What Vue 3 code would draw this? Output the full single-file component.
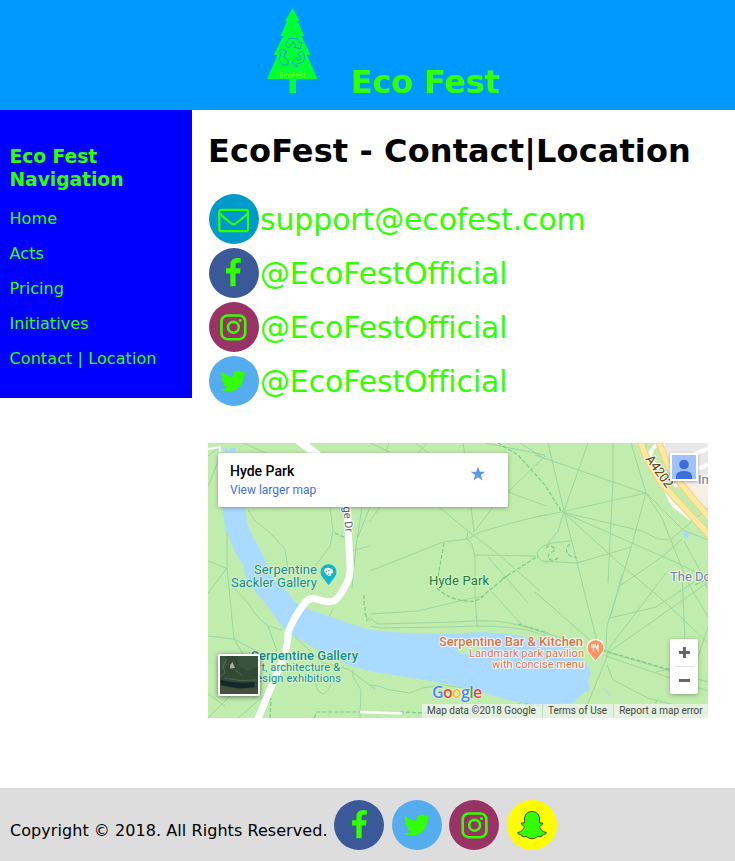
<script setup>
const navItems = ['Home', 'Acts', 'Pricing', 'Initiatives', 'Contact | Location']

const contacts = [
  { icon: 'email', label: 'support@ecofest.com' },
  { icon: 'facebook', label: '@EcoFestOfficial' },
  { icon: 'instagram', label: '@EcoFestOfficial' },
  { icon: 'twitter', label: '@EcoFestOfficial' },
]

const footerIcons = ['facebook', 'twitter', 'instagram', 'snapchat']

const colors = {
  email: '#0099cc',
  facebook: '#3b5998',
  instagram: '#993366',
  twitter: '#55acee',
  snapchat: '#fffc00',
}

// Footpaths across the park, in map coordinates
const paths = [
  'M0 13L10 5M0 43Q8 25 12 12M19 86L19 125L23 165L26 196M0 150L19 125M35 0L62 12',
  'M40 67L47 78L60 88L77 106L81 134M122 64L125 88L122 103L103 129M154 64L148 103L144 145M143 108L162 103M162 64L150 94',
  'M24 143L40 160L48 172L60 183L74 187M60 183L69 208M0 193L26 196L48 208L60 218M26 196L40 219M0 251L17 263M0 275L30 245',
  'M87 194L115 220L140 226L167 246M107 239Q109 250 116 251Q122 247 123 241M145 227L145 234L153 247L152 275M125 165L120 177M156 170L162 178',
  'M162 128L235 99L260 96L272 89Q320 75 338 72M162 78L172 64M231 64L260 88L290 111L332 148M263 64L266 89L285 64M260 88L259 96L264 101L267 114L267 150L269 184',
  'M267 112L327 113M280 114L320 160M178 9L181 0M162 0L182 9M210 10L219 0M208 0L220 10M255 0L257 12M277 0L337 12M312 0L337 16',
  'M300 49L337 13M300 49L338 63M162 171L210 168L260 156L275 153M162 175L170 181L248 179Q290 175 314 183L370 200',
  'M162 183L173 185L240 184Q290 181 319 187L350 196M284 149L314 182',
  'M340 0L356 68L369 119L379 160L391 205M327 12L356 22L437 50M380 0L356 68L350 88L338 103M405 0L405 38L401 118L400 140',
  'M423 0L438 50L423 105L411 145L399 183L398 207M438 50L353 69L327 74M354 69L434 88L450 96L462 97M356 70L467 119L500 135',
  'M356 70L410 119L458 160L500 200M500 65L462 97M423 104L369 120L334 118M363 98L344 100Q332 103 329 110Q329 118 340 120',
  'M438 50L454 75L468 110L480 140L500 174M438 50L475 87L500 97M474 96L454 114L413 142M476 98L496 135L499 145',
  'M327 149L391 205M414 132L402 175L448 164L500 130M458 130L399 208M474 130L478 220M500 184L488 220L448 229',
  'M400 211L374 275M399 222L405 237L440 255L470 263L500 270M395 212L500 248M395 208L500 239M398 211L499 140M450 256L440 275M487 275L500 263',
  'M162 242L170 243L182 247L202 250L215 245L235 242L272 247L312 259L332 263M0 118L20 126M30 275L44 263L65 245',
]

const dashed = [
  'M127 90L140 96M156 152L156 160L159 178M290 0L310 12L337 42L353 68M236 100L231 128L229 139M229 145Q240 156 258 158Q270 160 277 151L300 132M294 136L330 113',
  'M310 181L340 190M394 207L463 227M106 275L109 269L155 269M192 269L220 270M62 275L63 255M487 142L500 135M310 261L340 263',
  'M338 105Q341 101 345 104Q349 107 344 109Q338 112 341 116Q345 119 350 115M362 101Q355 107 362 113L369 115',
]
</script>

<template>
  <div class="page">
    <header class="header">
      <svg class="tree" width="51" height="86" viewBox="0 0 51 86">
        <path fill="#00ff33" d="M25.500 0L32.500 13H30.500L37 28H34.500L43.500 47H40L50.500 71H29V85H22.500V71H0L10.500 47H7L16 28H13.500L20 13H18Z" />
        <g fill="none" stroke="#0b9edc" stroke-width="1">
          <path d="M18 37L22 30.500H30L33 35L35 34L33 41L27 39L29 38L26 34L22 40Z" />
          <path d="M15 41L20 44L18 45L17 49L21 52V57H15L12 51L14 46L12 43Z" />
          <path d="M31 46L35 43L38 48L36 54L30 56V59L25 54L30 49V52H33L34 50Z" />
        </g>
        <text x="12" y="69.500" textLength="27" lengthAdjust="spacingAndGlyphs">EcoFest</text>
      </svg>
      <h1 class="brand">Eco Fest</h1>
    </header>

    <div class="body">
      <nav class="nav">
        <h3>Eco Fest<br />Navigation</h3>
        <a v-for="item in navItems" :key="item">{{ item }}</a>
      </nav>

      <main class="main">
        <h1 class="title">EcoFest - Contact|Location</h1>
        <ul class="contacts">
          <li v-for="(c, i) in contacts" :key="i">
            <svg class="badge" width="50" height="50" viewBox="0 0 50 50">
              <circle cx="25" cy="25" r="25" :fill="colors[c.icon]" />
              <g v-if="c.icon === 'email'" fill="none" stroke="#33ff00" stroke-width="2.200">
                <rect x="10.300" y="15.900" width="28.700" height="21.300" rx="2" />
                <path d="M10.800 19.500Q12.800 22 16.800 25L21.800 29Q24.700 31.500 27.600 29L32.600 25Q36.600 22 38.600 19.500" />
              </g>
              <path v-else-if="c.icon === 'facebook'" class="glyph" transform="translate(8.900 10) scale(.017)" d="M1343 12v264h-157q-86 0-116 36t-30 108v189h293l-39 296h-254v759h-306v-759h-255v-296h255v-218q0-186 104-288.500t277-102.500q147 0 228 12z" />
              <g v-else-if="c.icon === 'instagram'" fill="none" stroke="#33ff00" stroke-width="2.600">
                <rect x="12.500" y="13.500" width="23.700" height="23.700" rx="6" />
                <circle cx="24.400" cy="25.300" r="5.400" />
                <circle class="glyph" cx="31.300" cy="18.500" r="1.600" stroke="none" />
              </g>
              <path v-else class="glyph" transform="translate(9.300 10.200) scale(.0165)" d="M1684 408q-67 98-162 167 1 14 1 42 0 130-38 259.500t-115.500 248.500-184.500 210.500-258 146-323 54.500q-271 0-496-145 35 4 78 4 225 0 401-138-105-2-188-64.500t-114-159.500q33 5 61 5 43 0 85-11-112-23-185.500-111.500t-73.500-205.500v-4q68 38 146 41-66-44-105-115t-39-154q0-88 44-163 121 149 294.500 238.500t371.500 99.500q-8-38-8-74 0-134 94.500-228.500t228.500-94.500q140 0 236 102 109-21 205-78-37 115-142 178 93-10 186-50z" />
            </svg>
            <span>{{ c.label }}</span>
          </li>
        </ul>

        <section class="map">
          <svg class="tiles" width="500" height="275" viewBox="0 0 500 275">
            <rect width="500" height="275" fill="#c0ecae" />
            <path fill="#e8e8e8" d="M452 0H500V75L474 43Z" />
            <path fill="#f5efe5" d="M474 40L500 31V65L488 54Z" />
            <g class="trail"><path v-for="(d, i) in paths" :key="i" :d="d" /></g>
            <g class="trail dash"><path v-for="(d, i) in dashed" :key="i" :d="d" /></g>
            <g class="water">
              <path d="M14 5Q19 4 20 9L17 12L14 55V62L17 84L26 107L35 122L38 137L57 160L79 190L88 194L114 210L140 222L165 229L205 235L245 242L272 249L305 258L332 262L365 260L377 249L382 247L380 239L383 229L377 219L356 200L332 198L309 192L275 189L242 191L195 190L162 187L140 180L97 165L87 159L80 149L65 135L55 112L40 84L37 69L34 20L28 10L27 5H22L20 12Z" />
              <circle cx="478" cy="92" r="3" />
              <path d="M394 244Q401 249 403 255Q398 250 394 244Z" />
            </g>
            <path fill="#c0ecae" d="M250 196H274V211H253Q246 206 250 196Z" />
            <g class="road">
              <path d="M49 278L76 213Q80 202 80 190Q85 175 97 160Q101 154 108 156Q119 160 126 158Q132 154 137 143Q143 135 142 123L139 62" stroke-width="7" />
              <path d="M90 -3L116 17" stroke-width="8" />
              <path d="M0 6L12 4V9" stroke-width="2" />
              <path d="M152 269L194 270.500" stroke-width="2.500" />
              <path d="M445 6Q439 11 445 19L461 54Q463 61 470 66L482 75L491 77M445 5Q450 0 457 1M486 11L500 6M486 27L500 22M466 43L477 38" stroke-width="4" />
            </g>
            <g fill="none">
              <g stroke="#f6d27b" stroke-width="7">
                <path d="M432 -3Q438 19 456 43L503 94" /><path d="M450 -3L459 20Q466 34 474 42L503 77" />
              </g>
              <g stroke="#ffe9a1" stroke-width="5">
                <path d="M432 -3Q438 19 456 43L503 94" /><path d="M450 -3L459 20Q466 34 474 42L503 77" />
              </g>
            </g>
            <g class="label">
              <text class="teal" x="46" y="131" textLength="63">Serpentine</text>
              <text class="teal" x="23" y="143.500" textLength="86">Sackler Gallery</text>
              <text class="teal strong" x="43" y="217" textLength="107">Serpentine Gallery</text>
              <text class="teal small" x="42" y="228" textLength="90">Art, architecture &amp;</text>
              <text class="teal small" x="42" y="239" textLength="91">design exhibitions</text>
              <text class="park" x="221" y="142" textLength="60">Hyde Park</text>
              <text class="food strong" x="231" y="202.500" textLength="144">Serpentine Bar &amp; Kitchen</text>
              <text class="food small" x="261" y="214" textLength="115">Landmark park pavilion</text>
              <text class="food small" x="284" y="225" textLength="92">with concise menu</text>
              <text class="place" x="462" y="137.500">The Do</text>
              <text class="place" x="490" y="41">Im</text>
              <text class="route" transform="translate(437 16) rotate(54)" textLength="37">A4202</text>
              <text class="street" transform="translate(134.500 55) rotate(85)">idge Dr</text>
            </g>
            <path fill="#12b5cb" d="M120.500 142L115 135A8 8 0 1 1 126 135Z" />
            <path fill="#fff" d="M116 128Q117 124 121 125Q126 126 125 130Q122 130 123 133Q118 133 116 128Z" />
            <g fill="#12b5cb"><circle cx="118.500" cy="128.500" r=".8" /><circle cx="121" cy="127.500" r=".8" /><circle cx="120.500" cy="131" r=".8" /></g>
            <path fill="#fff" d="M387.500 219L379.500 209A9 9 0 1 1 395.500 209Z" />
            <path fill="#ff9466" d="M387.500 217.500L380.500 209A8 8 0 1 1 394.500 209Z" />
            <path fill="none" stroke="#fff" stroke-width="1.200" d="M385.500 201V209M383.800 201V204H387.200V201M390 209V202Q388.500 203 389 205.500H390" />
          </svg>

          <div class="google"><span class="b">G</span><span class="r">o</span><span class="y">o</span><span class="b">g</span><span class="g">l</span><span class="r">e</span></div>

          <div class="place-card">
            <div>
              <div class="place-name">Hyde Park</div>
              <div class="larger">View larger map</div>
            </div>
            <svg width="16" height="16" viewBox="0 0 16 16"><path fill="#5e97e8" d="M8 .5L9.800 5.700H15.300L10.900 9L12.500 14.400L8 11.200L3.500 14.400L5.100 9L.7 5.700H6.200Z" /></svg>
          </div>

          <div class="avatar">
            <svg width="24" height="24" viewBox="0 0 24 24"><circle cx="12" cy="9.500" r="4.800" fill="#3c6fdc" /><path fill="#3c6fdc" d="M4 24V20.500Q5 16 12 16Q19 16 20 20.500V24Z" /></svg>
          </div>

          <div class="satellite">
            <svg width="38" height="38" viewBox="0 0 38 38">
              <rect width="38" height="38" fill="#304a34" />
              <path fill="#38543c" d="M18 0H38V11L27 15L19 9ZM5 0L8 9L1 16V0Z" />
              <path fill="#45513d" d="M0 30L18 33L38 32V38H0Z" />
              <path fill="#14272d" d="M1 24Q18 28 35 26L34 31Q20 34 1 29Z" />
              <path fill="none" stroke="#5d6d54" d="M0 21L5 17L3 10L7 3M4 22Q20 26 37 24M15 14L22 19" stroke-width=".8" />
              <path fill="#b0aa97" d="M10 9L12.500 6L15 12L10 12.500Z" />
            </svg>
          </div>

          <div class="zoomer"><span class="plus"></span><hr /><span class="minus"></span></div>
          <div class="credits"><span>Map data ©2018 Google</span><span>Terms of Use</span><span>Report a map error</span></div>
        </section>
      </main>
    </div>

    <footer class="footer">
      <span class="copy">Copyright © 2018. All Rights Reserved.</span>
      <div class="socials">
        <svg v-for="name in footerIcons" :key="name" width="50" height="50" viewBox="0 0 50 50">
          <circle cx="25" cy="25" r="25" :fill="colors[name]" />
          <path v-if="name === 'facebook'" class="glyph" transform="translate(9.900 10) scale(.017)" d="M1343 12v264h-157q-86 0-116 36t-30 108v189h293l-39 296h-254v759h-306v-759h-255v-296h255v-218q0-186 104-288.500t277-102.500q147 0 228 12z" />
          <path v-else-if="name === 'twitter'" class="glyph" transform="translate(9.900 10.200) scale(.0165)" d="M1684 408q-67 98-162 167 1 14 1 42 0 130-38 259.500t-115.500 248.500-184.500 210.500-258 146-323 54.500q-271 0-496-145 35 4 78 4 225 0 401-138-105-2-188-64.500t-114-159.500q33 5 61 5 43 0 85-11-112-23-185.500-111.500t-73.500-205.500v-4q68 38 146 41-66-44-105-115t-39-154q0-88 44-163 121 149 294.500 238.500t371.500 99.500q-8-38-8-74 0-134 94.500-228.500t228.500-94.500q140 0 236 102 109-21 205-78-37 115-142 178 93-10 186-50z" />
          <g v-else-if="name === 'instagram'" fill="none" stroke="#33ff00" stroke-width="2.600">
            <rect x="13.700" y="13.500" width="23.700" height="23.700" rx="6" />
            <circle cx="25.600" cy="25.300" r="5.400" />
            <circle class="glyph" cx="32.500" cy="18.500" r="1.600" stroke="none" />
          </g>
          <path v-else class="glyph" stroke="#222" stroke-width=".8" d="M25 11.500C30 11.500 32.500 15 32.500 19L32.300 22.800C33.500 23.500 34.500 22.300 35.700 23.200C36.500 24.500 33.300 25.300 32.800 26.500C32.500 28.500 35.500 32 39.300 32.500C39.500 34.200 36.500 34.700 35.300 35C34.800 36 35.300 36.700 34 36.700C32.500 36.400 31 36.200 29.500 37.200C26.500 39.200 23.500 39.200 20.500 37.200C19 36.200 17.500 36.400 16 36.700C14.700 36.700 15.200 36 14.700 35C13.500 34.700 10.500 34.200 10.700 32.500C14.500 32 17.500 28.500 17.200 26.500C16.700 25.300 13.500 24.500 14.300 23.200C15.500 22.300 16.500 23.500 17.700 22.800L17.500 19C17.500 15 20 11.500 25 11.500Z" />
        </svg>
      </div>
    </footer>
  </div>
</template>

<style>
body { margin: 0; background: #fff; }
</style>

<style scoped>
.page { width: 735px; height: 861px; display: flex; flex-direction: column; overflow: hidden; font-family: "DejaVu Sans", sans-serif; color: #000; }
.header { height: 110px; flex: none; box-sizing: border-box; background: #0099ff; display: flex; align-items: flex-start; padding: 8px 0 0 267px; }
.tree { flex: none; }
.tree text { font: 7.500px "DejaVu Sans", sans-serif; fill: #8cff00; }
.brand { margin: 55px 0 0 32.500px; font-size: 32px; line-height: 38px; color: #33ff00; white-space: nowrap; letter-spacing: -.2px; }
.body { height: 678px; flex: none; display: flex; align-items: flex-start; }
.nav { width: 192px; height: 288px; flex: none; box-sizing: border-box; padding: 35px 10px 0 9.500px; background: #0000ff; color: #33ff00; display: flex; flex-direction: column; }
.nav h3 { margin: 0 0 10px; font-size: 18.720px; line-height: 23px; letter-spacing: -.05px; white-space: nowrap; }
.nav a { font-size: 16px; line-height: 35px; white-space: nowrap; letter-spacing: .09px; }
.main { padding: 22px 0 0 16px; }
.title { margin: 0; font-size: 32px; line-height: 39px; white-space: nowrap; letter-spacing: .11px; }
.contacts { list-style: none; margin: 23px 0 0 1px; padding: 0; display: flex; flex-direction: column; gap: 4px; }
.contacts li { display: flex; align-items: center; height: 50px; color: #33ff00; font-size: 30px; line-height: 50px; white-space: nowrap; }
.contacts span { letter-spacing: -.15px; padding-top: 2px; }
.badge { flex: none; margin-right: 1px; }
.glyph { fill: #33ff00; }
.map { position: relative; width: 500px; height: 275px; margin-top: 37px; overflow: hidden; font-family: Roboto, sans-serif; }
.tiles { display: block; }
.water { fill: #aadaff; }
.trail { fill: none; stroke: #9bd6a0; stroke-width: 1; }
.dash { stroke: #7bcb85; stroke-width: 1.200; stroke-dasharray: 4 2; }
.road { fill: none; stroke: #fff; stroke-linejoin: round; }
.label text { font-size: 13px; font-weight: 400; stroke: #fff; stroke-opacity: .85; stroke-width: 2px; stroke-linejoin: round; paint-order: stroke; }
.label .teal { fill: #178a94; stroke: #d9f4ce; }
.label .small { font-size: 11px; }
.label .strong { font-weight: 500; }
.label .park { fill: #257b2d; stroke: #d9f4ce; }
.label .food { fill: #db7348; stroke: #fff; }
.label .place { fill: #737ba2; }
.label .route { fill: #67400b; }
.label .street { fill: #5c6066; font-size: 11px; }
.google { position: absolute; left: 224px; top: 238px; font: 600 16px/22px "Open Sans", sans-serif; letter-spacing: -.7px; white-space: nowrap; text-shadow: 0 0 1px #fff, 0 0 2px #fff; }
.google .b { color: #4285f4; }
.google .r { color: #ea4335; }
.google .y { color: #fbbc05; }
.google .g { color: #34a853; }
.place-card { position: absolute; left: 10px; top: 10px; width: 290px; height: 54px; box-sizing: border-box; padding: 9px 22px 0 12px; display: flex; justify-content: space-between; background: #fff; border-radius: 2px; box-shadow: 0 1px 4px rgba(0, 0, 0, .3); }
.place-card svg { margin-top: 4px; }
.place-name { font-size: 14px; font-weight: 500; line-height: 18px; }
.larger { font-size: 12px; line-height: 20px; color: #4272db; }
.avatar { position: absolute; left: 462px; top: 10px; width: 24px; height: 24px; border: 2px solid #fff; background: #a0c3ff; box-shadow: 0 1px 3px rgba(0, 0, 0, .3); }
.avatar svg { display: block; }
.satellite { position: absolute; left: 10px; top: 211px; width: 38px; height: 38px; border: 2px solid #fff; border-radius: 2px; box-shadow: 0 1px 5px rgba(0, 0, 0, .5); }
.satellite svg { display: block; }
.zoomer { position: absolute; left: 462px; top: 196px; width: 28px; height: 55px; background: #fff; border-radius: 2px; box-shadow: 0 1px 4px rgba(0, 0, 0, .3); display: flex; flex-direction: column; align-items: center; }
.zoomer hr { width: 19px; margin: 0; border: 0; border-top: 1px solid #e2e2e2; }
.plus, .minus { width: 28px; height: 27px; background: linear-gradient(#666, #666) center / 11px 3px no-repeat; }
.plus { background: linear-gradient(#666, #666) center / 11px 3px no-repeat, linear-gradient(#666, #666) center / 3px 11px no-repeat; }
.credits { position: absolute; right: 0; bottom: 0; height: 14px; width: 286px; display: flex; justify-content: space-between; background: rgba(245, 245, 245, .7); font-size: 10px; line-height: 14px; color: #444; white-space: nowrap; }
.credits span { padding: 0 6px 0 5px; }
.credits span + span { border-left: 1px solid rgba(120, 140, 120, .25); }
.footer { height: 73px; flex: none; background: #ddd; box-sizing: border-box; padding: 12px 0 0 10px; display: flex; align-items: flex-start; }
.copy { width: 324px; font-size: 16px; line-height: 20px; padding-top: 21px; white-space: nowrap; letter-spacing: .06px; }
.socials { display: flex; gap: 7.700px; }
.socials svg { display: block; flex: none; }
</style>
